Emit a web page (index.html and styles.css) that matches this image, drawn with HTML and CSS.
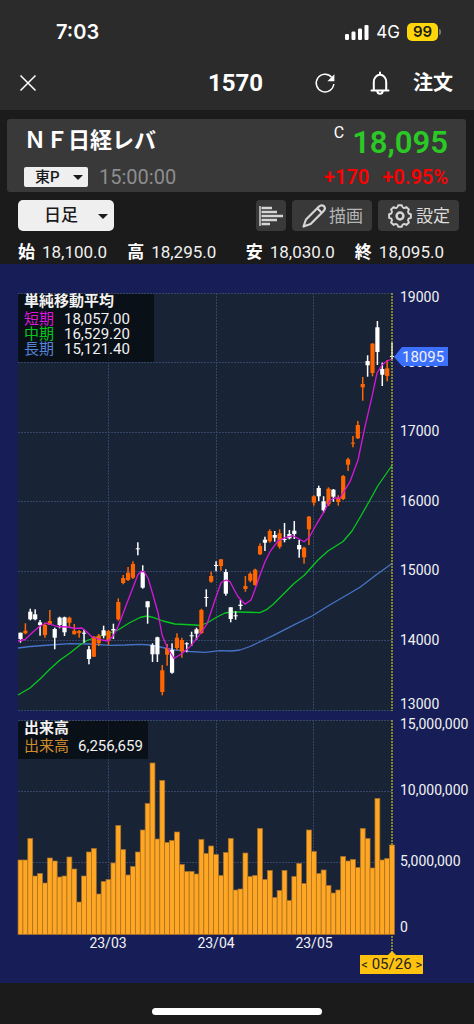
FILE: index.html
```html
<!DOCTYPE html>
<html lang="ja">
<head>
<meta charset="utf-8">
<meta name="viewport" content="width=device-width, initial-scale=1">
<title>1570 NF日経レバ</title>
<link rel="stylesheet" href="styles.css">
</head>
<body>
<header class="top">
  <div class="status">
    <span class="clock">7:03</span>
    <span class="status-right">
      <svg class="signal" viewBox="0 0 24 15" aria-hidden="true"><rect x="0" y="9" width="4" height="6" rx="1.2"/><rect x="6.5" y="6.5" width="4" height="8.5" rx="1.2"/><rect x="13" y="3.500" width="4" height="11.500" rx="1.200"/><rect x="19.500" y="0" width="4" height="15" rx="1.200"/></svg>
      <span class="network">4G</span>
      <span class="battery">99</span>
    </span>
  </div>
  <nav class="nav">
    <button class="icon-btn close" aria-label="閉じる"><svg viewBox="0 0 20 20" width="20" height="20"><path d="M2.500 2.500 17.500 17.500M17.500 2.500 2.500 17.500"/></svg></button>
    <h1 class="code">1570</h1>
    <div class="nav-actions">
      <button class="icon-btn" aria-label="更新"><svg viewBox="0 0 24 24" width="24" height="24"><path d="M18.600 6.200A8.800 8.800 0 1 0 20.800 13"/><path class="solid" d="M21.400 3.200V10.200H14.400Z"/></svg></button>
      <button class="icon-btn" aria-label="アラート"><svg viewBox="0 0 24 26" width="24" height="26"><path class="bold" d="M3.500 20.500H20.500M5.800 20V12A6.200 7.200 0 0 1 18.200 12V20M12 4.800V2.500M9.300 21A2.700 2.700 0 0 0 14.700 21"/></svg></button>
      <button class="order">注文</button>
    </div>
  </nav>
</header>

<main>
  <section class="quote">
    <div class="quote-left">
      <h2 class="name">ＮＦ日経レバ</h2>
      <div class="market-row">
        <span class="picker picker-small"><select aria-label="市場"><option>東P</option></select></span>
        <time class="time">15:00:00</time>
      </div>
    </div>
    <div class="quote-right">
      <div class="price-row"><span class="flag">C</span><strong class="price">18,095</strong></div>
      <div class="change"><span>+170</span><span>+0.95%</span></div>
    </div>
  </section>

  <div class="toolbar">
    <span class="picker picker-large"><select aria-label="足種"><option>日足</option></select></span>
    <div class="tools">
      <button class="tool tool-profile" aria-label="価格帯別出来高"><svg viewBox="0 0 26 22" width="26" height="22"><path d="M2 1V21" stroke-width="1.500"/><path d="M3.500 3H14M3.500 7H19M3.500 11H25M3.500 15H19M3.500 19H12" stroke-width="2.400"/></svg></button>
      <button class="tool tool-draw"><svg viewBox="0 0 26 26" width="26" height="26"><path d="M2.500 23.500 5 16.500 18 3.500Q20.500 1.200 23 3.200 25 5.500 22.600 8L9.600 21ZM16.300 5.300 20.700 9.700" stroke-width="2.200"/></svg>描画</button>
      <button class="tool tool-settings"><svg viewBox="0 0 26 26" width="26" height="26"><path d="M11.280 2.140L14.720 2.140Q15.680 6.530 19.470 4.100L21.900 6.530Q19.470 10.320 23.860 11.280L23.860 14.720Q19.470 15.680 21.900 19.470L19.470 21.900Q15.680 19.470 14.720 23.860L11.280 23.860Q10.320 19.470 6.530 21.900L4.100 19.470Q6.530 15.680 2.140 14.720L2.140 11.280Q6.530 10.320 4.100 6.530L6.530 4.100Q10.320 6.530 11.280 2.140Z" stroke-width="2"/><circle cx="13" cy="13" r="3.400" stroke-width="2.500"/></svg>設定</button>
    </div>
  </div>

  <div class="ohlc">
    <dl><dt>始</dt><dd>18,100.0</dd><dt>高</dt><dd>18,295.0</dd></dl>
    <dl><dt>安</dt><dd>18,030.0</dd><dt>終</dt><dd>18,095.0</dd></dl>
  </div>

  <section class="chart-area" aria-label="日足チャート">
    <svg class="chart" viewBox="0 264 474 719">
      <rect class="plot" x="18" y="293" width="375" height="418"/>
      <rect class="plot" x="18" y="720" width="375" height="214"/>
      <path class="grid" d="M18 293.500H393M18 362.500H393M18 432.500H393M18 501.500H393M18 571.500H393M18 640.500H393M18 710.500H393M18 720.500H393M18 791.500H393M18 862.500H393M108.500 293V711M216.500 293V711M313.500 293V711M108.500 720V934M216.500 720V934M313.500 720V934"/>
      <rect class="legend-box" x="18" y="294" width="136" height="68"/>
      <rect class="legend-box" x="18" y="721" width="130" height="38"/>
      <path class="ma long" d="M18 648 30 646.500 50 645 70 643.700 90 644 110 645.300 125 645 140 644.300 150 645 160 647 175 650 190 651.500 205 652.300 220 650.700 232 651 240 650 250 646.500 273 635.700 295 624.300 312 616 328 606 360 587.300 376 575 392 563.500"/>
      <path class="ma mid" d="M18 695 30 688 40 679 50 669 60 660 70 653 80 645 87 640.500 100 636 110 633 118 630 130 622.500 140 617.500 147 616 153 617.300 163 621 175 624 195 625 200 625.500 207 623 217 617 225 613 232 612 240 612 260 612.600 267 609.300 273 604.500 285 592.500 294 583.500 304 575.500 318 560 328 551 343 541.500 352 531 360 517.500 370 500 378 485.500 392 465.500"/>
      <g id="candles"></g>
      <path class="ma short" d="M18 641 25 639.500 33 632 40 626 46 623 53 625 57 626.500 68 627 75 628.500 82 628 87 632 92 637 97 638.500 102 640 108 641 113 636 117 629 121 619 127 603 138 574.500 141 571.500 144 571.700 148 578 153 595 158 612.700 162 635 167 647 174 658.500 182 653.500 190 646.700 198 637 207 624 215 600 221 582.700 226 580 230 581.700 238 596.700 245 604.300 251 600 255 589.500 260 575 265 561.700 270 551.700 278 541 285 537.700 293 535.700 304 541.700 309 537.700 317 523.300 324 511.700 330 500 335 498 340 498 343 493 350 481.700 358 460 365 426.700 372 396.700 377 373 382 365 387 361 392 359"/>
      <g id="volumes"></g>
      <path class="cursor" d="M392 293V711M392 720V845M392 936V952"/>
      <path class="cursor-candle" d="M392 343V359"/>

      <text class="label strong" x="24" y="306">単純移動平均</text>
      <text class="label t-short" x="24" y="324">短期</text><text class="label" x="64" y="324">18,057.00</text>
      <text class="label t-mid" x="24" y="339">中期</text><text class="label" x="64" y="339">16,529.20</text>
      <text class="label t-long" x="24" y="354">長期</text><text class="label" x="64" y="354">15,121.40</text>
      <text class="label strong" x="24" y="733">出来高</text>
      <text class="label t-vol" x="24" y="751">出来高</text><text class="label" x="78" y="751">6,256,659</text>

      <g class="axis">
        <text x="400" y="302">19000</text><text x="400" y="367">18000</text><text x="400" y="436">17000</text><text x="400" y="506">16000</text><text x="400" y="575">15000</text><text x="400" y="645">14000</text><text x="400" y="709">13000</text>
        <text x="400" y="729">15,000,000</text><text x="400" y="795">10,000,000</text><text x="400" y="866">5,000,000</text><text x="400" y="932">0</text>
        <g class="dates"><text x="108" y="948">23/03</text><text x="216" y="948">23/04</text><text x="314" y="948">23/05</text></g>
      </g>
      <path class="price-tag" d="M394 357 402 347H448V366H402Z"/>
      <text class="label" x="402" y="362">18095</text>
    </svg>
    <div class="date-pill"><button aria-label="前の日">&lt;</button><span>05/26</span><button aria-label="次の日">&gt;</button></div>
  </section>
</main>
<footer class="home"><span class="home-bar"></span></footer>
<script src="chart.js"></script>
</body>
</html>
```
FILE: styles.css
```css
* { box-sizing: border-box; }
body {
  margin: 0;
  min-height: 100vh;
  display: flex;
  flex-direction: column;
  background: #1b1b1b;
  color: #fff;
  font-family: Roboto, "Noto Sans CJK JP", sans-serif;
}
button, select { font: inherit; color: inherit; border: 0; padding: 0; margin: 0; background: none; }
h1, h2, dl, dd { margin: 0; }

.top { background: #2b2b2b; height: 110px; padding-top: 20px; }
.status { display: flex; justify-content: space-between; align-items: center; height: 24px; padding: 0 34px 0 56px; }
.clock { font: 600 20px/24px Inter, sans-serif; }
.status-right { display: flex; align-items: center; gap: 7px; }
.signal { width: 24px; height: 15px; fill: #fff; }
.network { font: 400 17px/24px Inter, sans-serif; }
.battery {
  position: relative;
  width: 31px;
  height: 18px;
  margin-right: 2px;
  border-radius: 5px;
  background: #ffd60a;
  color: #1b1b1b;
  font: 600 15px/18px Inter, sans-serif;
  text-align: center;
}
.battery::after { content: ""; position: absolute; right: -3px; top: 6px; width: 2px; height: 6px; border-radius: 0 2px 2px 0; background: #77776f; }

.nav { display: grid; grid-template-columns: 1fr auto 1fr; align-items: center; height: 44px; margin-top: 17px; padding: 0 21px 0 18px; }
.icon-btn { display: flex; }
.icon-btn path { fill: none; stroke: #fff; stroke-width: 1.5; stroke-linejoin: round; }
.icon-btn .bold { stroke-width: 2; stroke-linecap: round; }
.icon-btn .solid { fill: #fff; stroke: none; }
.close { justify-self: start; }
.code { font-size: 24px; line-height: 28px; font-weight: 700; }
.nav-actions { display: flex; align-items: center; justify-content: flex-end; gap: 31px; }
.order { margin-left: -10px; font-size: 20px; line-height: 28px; font-weight: 700; }

.quote {
  display: flex;
  justify-content: space-between;
  height: 73px;
  margin: 9px 8px 0 7px;
  padding: 8px 18px 0 17px;
  border-radius: 3px;
  background: #393939;
}
.name { font-size: 22px; line-height: 28px; font-weight: 700; }
.market-row { display: flex; align-items: center; gap: 11px; height: 20px; margin-top: 12px; }
.time { color: #8e8e8e; font-size: 20px; line-height: 20px; }
.quote-right { display: flex; flex-direction: column; align-items: flex-end; }
.price-row { display: flex; align-items: flex-start; gap: 8px; }
.flag { font-size: 16px; line-height: 12px; }
.price { color: #2bc926; font-size: 31px; line-height: 32px; font-weight: 600; }
.change { display: flex; gap: 13px; margin-top: 6px; color: #f00; font-size: 20px; line-height: 24px; font-weight: 600; }

.picker { position: relative; display: inline-flex; color: #1b1b1b; }
.picker::after {
  content: "";
  position: absolute;
  top: 50%;
  right: 5px;
  margin-top: -2px;
  border: 5px solid transparent;
  border-top-color: #1b1b1b;
  border-bottom-width: 0;
  pointer-events: none;
}
.picker select { appearance: none; width: 100%; background: #efefef; border-radius: 2px; }
.picker-small { width: 64px; height: 20px; }
.picker-small select { padding-left: 11px; font-size: 15px; line-height: 20px; font-weight: 500; }
.picker-large { width: 96px; height: 31px; }
.picker-large::after { right: 6px; }
.picker-large select { padding-left: 26px; border-radius: 5px; font-size: 17px; line-height: 31px; font-weight: 500; }

.toolbar { display: flex; justify-content: space-between; margin-top: 8px; padding: 0 15px 0 18px; }
.tools { display: flex; gap: 6px; }
.tool { display: flex; align-items: center; justify-content: center; height: 31px; border-radius: 4px; background: #393939; color: #ddd; font-size: 17px; line-height: 24px; }
.tool svg { fill: none; stroke: #d5d5d5; stroke-linejoin: round; }
.tool-profile { width: 30px; }
.tool-draw { width: 80px; gap: 2px; color: #b5b5b5; }
.tool-settings { width: 81px; gap: 3px; }

.ohlc { display: flex; justify-content: space-between; height: 33px; padding: 9px 30px 0 18px; font-size: 17px; line-height: 24px; }
.ohlc dl { display: flex; }
.ohlc dt { font-weight: 700; margin-right: 7px; }
.ohlc dd + dt { margin-left: 20px; }
.ohlc dd { color: #f0f0f0; }

.chart-area { position: relative; background: #171e57; }
.chart { display: block; width: 100%; height: auto; font-size: 15px; }
.plot { fill: #182436; }
.grid { fill: none; stroke: #35456a; stroke-width: 1; stroke-dasharray: 2 1; }
.legend-box { fill: #000; fill-opacity: .55; }
.ma { fill: none; stroke-width: 1.3; stroke-linejoin: round; }
.short { stroke: #d916d9; }
.mid { stroke: #08c71c; }
.long { stroke: #4673c8; }
.up { fill: #ff6500; }
.down { fill: #fff; }
.volume { fill: #ffa722; stroke: #a7702b; stroke-width: .7; }
.cursor { stroke: #a6a42e; stroke-width: 1.5; stroke-dasharray: 2 1; }
.cursor-candle { stroke: #d6d69a; stroke-width: 1.5; stroke-dasharray: 2 1; }
.label, .axis { fill: #f2f2f2; }
.axis { font-size: 14px; }
.strong { font-weight: 700; }
.t-short { fill: #d916d9; }
.t-mid { fill: #08c71c; }
.t-long { fill: #5583d8; }
.t-vol { fill: #d18c2b; }
.dates { text-anchor: middle; }
.price-tag { fill: #3c70ff; }

.date-pill {
  position: absolute;
  left: 76%;
  bottom: 9px;
  display: flex;
  justify-content: space-between;
  width: 63px;
  height: 19px;
  padding: 0 1px;
  background: #ffc20e;
  color: #222;
  font-size: 15px;
  line-height: 19px;
}
.date-pill::before { content: ""; position: absolute; top: -4px; left: 50%; margin-left: -4px; border: 4px solid transparent; border-bottom-color: #ffc20e; border-top-width: 0; }
.date-pill button { font-size: 13px; }

.home { flex: 1; display: flex; justify-content: center; padding-top: 25px; min-height: 41px; background: #1b1b1b; }
.home-bar { width: 36%; height: 7px; border-radius: 4px; background: #fff; }
```
FILE: chart.js
```js
const NS = 'http://www.w3.org/2000/svg';
const FIRST = 20.5;
const STEP = 4.889;

// [rising, body top, body bottom, high, low] in chart units
const candles = [
  [0,632.7,639,632.7,642.7],[1,630.7,633.3,623.3,634.3],[0,611.7,619.3,608.7,620.3],[0,614.3,619.3,609.3,620.3],
  [0,622.3,625,620,635.7],[1,625,635,622.7,637.7],[1,621,625,610,625],[0,629,637.7,627.7,649.3],
  [0,617.7,625,616.7,628.3],[0,617.3,632.3,616.7,636],[1,617.7,622.7,616.7,626.7],[1,630.7,634.3,624,634.3],
  [1,631,633,630,637.7],[0,632.7,633.7,629.3,642.7],[0,649.3,659,646,664.3],[1,636.7,656.7,636,657],
  [1,635.7,643.3,634,646],[0,630.3,635.7,625.7,638.3],[1,631,640.7,630,645],[0,629,630.5,623.7,639],
  [1,602,619.3,598.3,620.7],[1,578,583,575,584.3],[1,572.7,580,567,581],[1,564,577.7,561.3,579],
  [0,548.3,549.3,542.3,555.3],[0,571.7,587.7,565.3,588.7],[0,601.3,607.3,601.3,623.7],[0,645,654.3,643.3,662],
  [0,637.3,654.3,636.7,662],[1,670.3,692,665,695.3],[1,648,654.7,644,665.7],[0,650,672.7,643.3,673.7],
  [1,637.7,648,633.3,650],[1,640,651.3,637.7,657.7],[0,643.3,644.3,642.3,652.3],[0,635.3,636.3,631.7,646],
  [0,629.3,633.7,627.7,640],[1,610,633,608.7,634],[0,597,598,589.3,606.7],[1,576,581.7,571.7,582.7],
  [0,565,566,561.3,571.3],[1,559.3,566,559.3,570.7],[0,572,593.7,569.3,595.7],[0,607.3,619,607.3,622.3],
  [0,615.3,616.3,611.3,619.7],[0,604.7,606,600,609.7],[1,586,589,576,591.7],[1,573.7,580.7,572.3,582.3],
  [1,569.7,585,568.7,585.7],[1,546,554.3,543.3,555],[0,539.7,542.7,536.7,551],[1,531,541.3,529.3,542.7],
  [0,535,537.7,531,541.7],[1,533.3,546.7,529.3,548.7],[0,539,540,523,542.3],[0,534,538.3,530,539.3],
  [0,530.7,534,521,539],[0,545,549.3,540,557.7],[1,547.7,557.3,546.7,563.7],[1,516.7,529.3,516,545],
  [1,496.3,502.7,495.3,505.7],[0,488,496.3,485.7,501],[0,501.3,510.3,496.3,512.7],[1,488.7,504.3,487.3,506],
  [0,489.7,496.7,489,501.7],[1,497.7,502,495.3,505.7],[1,476,499,475,500],[1,459.3,464.7,457.7,471],
  [1,442.7,443.7,436,447.3],[1,425,438.3,421,439],[1,384,387.3,377,400.7],[0,361,365.3,355.3,376.7],
  [1,343.7,373,343,376.3],[0,327.3,352,321,365],[0,369,374.7,362.7,386],[1,368.3,376,360,381.3],
  [0,356,357,343,359]
];

// top edge of each volume bar
const volumes = [
  860,860,838.5,876,873.5,883,858,861,877,876,857,869,902,876,852,848.5,894,881.5,879.5,863,
  825.5,849.5,875,866.5,852,830,803.5,763,839,780.5,842.5,840.5,832,864.5,871.5,871.5,874,839.5,853.5,846,
  854.5,875.5,852.5,838.5,890,889,853,876.5,875.5,828.5,879.5,870.5,897.5,890.5,870.5,900.5,876.5,863.5,883.5,830,
  851.5,873.5,870,885.5,893,890,856.5,861,859.5,867.5,828.5,838.5,868,798.5,860,858.5,845
];
const BASE = 934.5;

function addRect(parent, cls, x, y, width, height) {
  const rect = document.createElementNS(NS, 'rect');
  const values = { class: cls, x, y, width, height };
  for (const key in values) rect.setAttribute(key, values[key]);
  parent.appendChild(rect);
}

const candleLayer = document.getElementById('candles');
candles.forEach(([rising, top, bottom, high, low], i) => {
  const x = FIRST + i * STEP;
  const cls = rising ? 'up' : 'down';
  addRect(candleLayer, cls, x - 0.75, high, 1.5, low - high);
  addRect(candleLayer, cls, x - 2.1, top, 4.2, bottom - top);
});

const volumeLayer = document.getElementById('volumes');
volumes.forEach((top, i) => {
  addRect(volumeLayer, 'volume', FIRST + i * STEP - STEP / 2, top, STEP, BASE - top);
});
```
